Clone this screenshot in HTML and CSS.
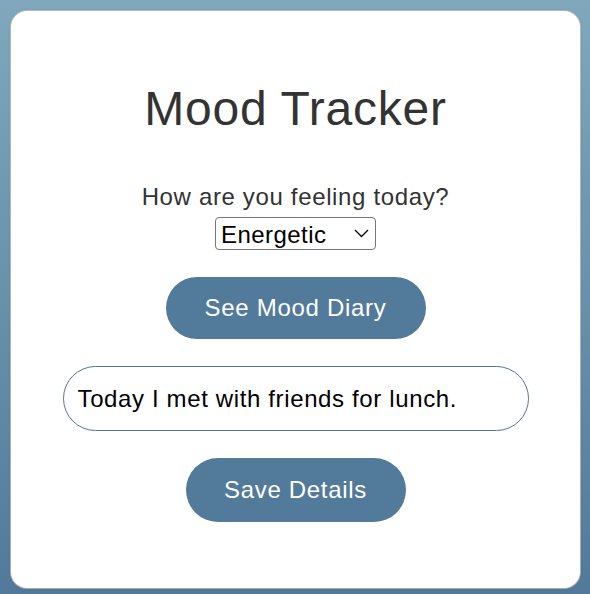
FILE: index.html
```html
<!DOCTYPE html>
<html lang="en">
<head>
<meta charset="utf-8">
<title>Mood Tracker</title>
<link rel="stylesheet" href="styles.css">
</head>
<body>
<main class="card">
  <h1 class="title">Mood Tracker</h1>
  <div class="question">
    <label class="question-label" for="mood">How are you feeling today?</label>
    <div class="select-wrap">
      <select id="mood" class="mood-select">
        <option>Energetic</option>
        <option>Happy</option>
        <option>Calm</option>
        <option>Sad</option>
      </select>
      <svg class="chevron" width="15" height="9" viewBox="0 0 15 9" aria-hidden="true"><path d="M1 1 L7.5 7.5 L14 1" fill="none" stroke="#000" stroke-width="1.3"/></svg>
    </div>
  </div>
  <button class="btn btn-diary" type="button">See Mood Diary</button>
  <input class="details" type="text" value="Today I met with friends for lunch.">
  <button class="btn btn-save" type="button">Save Details</button>
</main>
</body>
</html>
```
FILE: styles.css
```css
html, body {
  margin: 0;
  height: 100%;
}
body {
  background: linear-gradient(to bottom, #80a7bc 0%, #6a90ab 50%, #52799a 100%);
  padding: 11px 10px 0 11px;
  box-sizing: border-box;
  font-family: "Liberation Sans", Arial, Helvetica, sans-serif;
}
.card {
  height: 577px;
  background: #fff;
  border-radius: 16px;
  box-shadow: 0 0 0 1px rgba(200, 200, 200, 0.7), 0 0 3px rgba(0, 0, 0, 0.15);
  box-sizing: border-box;
  padding-top: 70px;
  display: flex;
  flex-direction: column;
  align-items: center;
}
.title {
  margin: 0;
  font-size: 48px;
  line-height: 55px;
  font-weight: normal;
  letter-spacing: 0.75px;
  color: #333;
}
.question {
  margin-top: 47px;
  display: flex;
  flex-direction: column;
  align-items: center;
  gap: 6px;
}
.question-label {
  font-size: 24px;
  line-height: 28px;
  letter-spacing: 0.65px;
  color: #333;
}
.select-wrap {
  position: relative;
  width: 161px;
  height: 33px;
}
.mood-select {
  appearance: none;
  -webkit-appearance: none;
  width: 161px;
  height: 33px;
  box-sizing: border-box;
  border: 1px solid #767676;
  border-radius: 4px;
  background: #fff;
  padding: 1px 0 0 5px;
  margin: 0;
  font-family: inherit;
  font-size: 24px;
  letter-spacing: 0.45px;
  color: #000;
}
.chevron {
  position: absolute;
  right: 7px;
  top: 12px;
  pointer-events: none;
}
.btn {
  border: none;
  background: #527a9a;
  color: #fff;
  font-family: inherit;
  font-size: 24px;
  letter-spacing: 0.7px;
  padding: 0;
  margin: 0;
}
.btn-diary {
  margin-top: 27px;
  width: 260px;
  height: 62px;
  border-radius: 31px;
}
.details {
  margin-top: 27px;
  width: 466px;
  height: 65px;
  box-sizing: border-box;
  border: 1px solid #4f7798;
  border-radius: 33px;
  padding: 0 14px;
  font-family: inherit;
  font-size: 24px;
  letter-spacing: 0.63px;
  color: #000;
  outline: none;
}
.btn-save {
  margin-top: 27px;
  width: 220px;
  height: 64px;
  border-radius: 32px;
}
```
